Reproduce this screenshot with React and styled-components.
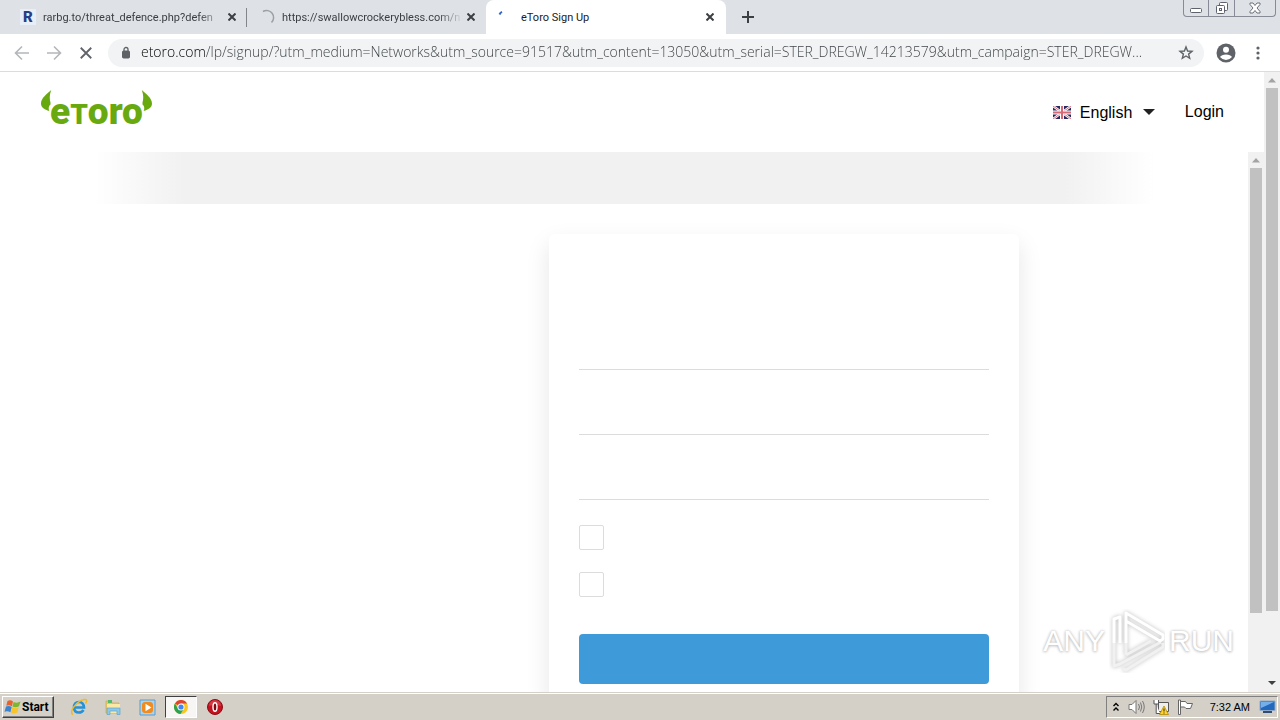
import React from "react";
import styled, { createGlobalStyle, css } from "styled-components";

const Global = createGlobalStyle`
  * { box-sizing: border-box; }
  body { margin: 0; background: #fff; font-family: "Liberation Sans", Arial, sans-serif; }
  button, input, select { font-family: inherit; margin: 0; }
  svg { display: block; flex: none; }
`;

const Desktop = styled.div`
  display: flex;
  flex-direction: column;
  height: 100vh;
  overflow: hidden;
`;

/* Browser tabs */
const TabStrip = styled.header`
  display: flex;
  flex: none;
  height: 34px;
  padding-left: 8px;
  background: #dee1e6;
`;

const Tab = styled.div`
  position: relative;
  display: flex;
  align-items: center;
  flex: 0 1 239px;
  min-width: 0;
  padding: 0 7px 0 12px;
  font: 11px Roboto, sans-serif;
  color: #3c4043;
  ${(p) => p.$divider && css`
    &::after {
      content: "";
      position: absolute;
      right: 0;
      top: 8px;
      height: 19px;
      width: 1px;
      background: #80868b;
    }
  `}
  ${(p) => p.$active && css`
    flex-basis: 240px;
    padding-right: 8px;
    background: #fff;
    border-radius: 8px 8px 0 0;
    color: #202124;
  `}
`;

const TabTitle = styled.span`
  flex: 1;
  overflow: hidden;
  margin-left: 7px;
  white-space: nowrap;
  ${(p) => p.$fade && css`mask-image: linear-gradient(90deg, #000 86%, transparent);`}
`;

const SiteInitial = styled.span`
  width: 16px;
  background: #e8eef8;
  font: 900 15px/16px Roboto, sans-serif;
  text-align: center;
  color: #253f85;
`;

const PlainButton = styled.button`
  display: flex;
  align-items: center;
  justify-content: center;
  flex: none;
  width: ${(p) => p.$w || 16}px;
  height: ${(p) => p.$h || 16}px;
  padding: 0;
  border: 0;
  background: none;
  color: ${(p) => p.$color || "#3c4043"};
`;

const NewTab = styled(PlainButton)`
  margin-left: 8px;
`;

const WindowButtons = styled.div`
  display: flex;
  height: 17px;
  margin: 0 4px 0 auto;
  border: 1px solid #868b95;
  border-top: 0;
  border-radius: 0 0 4px 4px;
`;

const WindowButton = styled(PlainButton)`
  height: 16px;
  & + & { border-left: 1px solid #868b95; }
`;

/* Browser toolbar */
const Toolbar = styled.nav`
  display: flex;
  align-items: center;
  flex: none;
  height: 38px;
  padding: 0 6px;
  border-bottom: 1px solid #dadce0;
  background: #fff;
`;

const Omnibox = styled.div`
  display: flex;
  align-items: center;
  flex: 1;
  min-width: 0;
  height: 28px;
  margin: 0 6px;
  padding: 0 8px 0 10px;
  border-radius: 14px;
  background: #f1f3f4;
`;

const Address = styled.input`
  flex: 1;
  min-width: 0;
  height: 26px;
  padding: 0 0 2px;
  margin-left: 7px;
  border: 0;
  outline: 0;
  font: 300 14px "Open Sans", sans-serif;
  color: transparent;
  background: linear-gradient(90deg, #000 65px, #3c4043 65px);
  background-clip: text;
  -webkit-background-clip: text;
`;

/* Web page */
const Viewport = styled.div`
  position: relative;
  display: flex;
  flex: 1;
  min-height: 0;
`;

const Site = styled.div`
  display: flex;
  flex-direction: column;
  flex: 1;
  min-width: 0;
`;

const SiteHeader = styled.header`
  display: flex;
  align-items: center;
  flex: none;
  height: 80px;
  padding: 0 40px;
  font-size: 16px;
  color: #000;
`;

const Brand = styled.a`
  display: flex;
  align-items: flex-start;
  height: 44px;
  color: #69a910;
  text-decoration: none;
`;

const BrandName = styled.span`
  display: flex;
  align-items: baseline;
  margin: 0 -3px;
  font: 900 37px/44px Roboto, sans-serif;
`;

const SmallCap = styled.span`
  font-size: 28px;
`;

const Language = styled.label`
  display: flex;
  align-items: center;
  gap: 9px;
  margin-left: auto;
`;

const LanguageSelect = styled.select`
  appearance: none;
  padding: 0;
  border: 0;
  background: none;
  font-size: 16px;
  color: #000;
`;

const LoginLink = styled.a`
  margin-left: 29px;
  color: #000;
  text-decoration: none;
`;

const Frame = styled.div`
  display: flex;
  flex: 1;
  min-height: 0;
`;

const FrameBody = styled.main`
  flex: 1;
  min-width: 0;
  overflow: hidden;
`;

const Container = styled.div`
  width: 85%;
  margin: 0 auto;
`;

const Banner = styled.div`
  height: 52px;
  background: linear-gradient(90deg, #fff, #f1f1f1 90px, #f1f1f1 calc(100% - 90px), #fff);
`;

const Card = styled.form`
  display: flex;
  flex-direction: column;
  width: 470px;
  max-width: 100%;
  height: 600px;
  margin: 30px 135px 0 auto;
  padding: 71px 30px 30px;
  border-radius: 6px;
  background: #fff;
  box-shadow: 0 10px 25px rgba(0, 0, 0, 0.1);
`;

const Field = styled.input`
  flex: none;
  height: 65px;
  padding: 30px 0 0;
  border: 0;
  border-bottom: 1px solid #dcdcdc;
  outline: 0;
  background: none;
  font-size: 16px;
`;

const Checks = styled.div`
  display: flex;
  flex-direction: column;
  gap: 22px;
  margin: 25px 0 37px;
`;

const Check = styled.input`
  appearance: none;
  width: 25px;
  height: 25px;
  border: 1px solid #dcdcdc;
  border-radius: 2px;
  background: #fff;
`;

const Submit = styled.button`
  flex: none;
  height: 50px;
  border: 0;
  border-radius: 4px;
  background: #3f9ad9;
`;

const Scrollbar = styled.div`
  display: flex;
  flex-direction: column;
  align-items: center;
  justify-content: space-between;
  flex: none;
  width: 16px;
  background: #f1f1f1;
`;

const ScrollTrack = styled.div`
  flex: 1;
  width: 12px;
`;

const Thumb = styled.div`
  height: ${(p) => p.$size}%;
  background: #c1c1c1;
`;

const Watermark = styled.div`
  position: absolute;
  right: 46px;
  bottom: 19px;
  display: flex;
  align-items: center;
  gap: 4px;
  font: 30px/64px "Liberation Sans", sans-serif;
  color: #fff;
  text-shadow: 0 0 3px #bbb, 0 1px 3px #ccc;
`;

/* Taskbar */
const Taskbar = styled.footer`
  display: flex;
  align-items: center;
  flex: none;
  height: 28px;
  padding: 1px 2px 0;
  border-top: 1px solid #d4d0c8;
  box-shadow: inset 0 1px #fff;
  background: #d4d0c8;
  font: 11px Roboto, sans-serif;
`;

const StartButton = styled.button`
  display: flex;
  align-items: center;
  gap: 1px;
  width: 52px;
  height: 22px;
  margin-right: 9px;
  padding: 0 1px;
  border: 1px solid;
  border-color: #fff #404040 #404040 #fff;
  box-shadow: inset -1px -1px #808080;
  background: #d4d0c8;
  font: bold 12px Roboto, sans-serif;
  color: #000;
`;

const TaskButton = styled.button`
  display: flex;
  align-items: center;
  justify-content: center;
  width: 32px;
  height: 22px;
  margin-right: 2px;
  padding: 0;
  border: 1px solid transparent;
  background: none;
  ${(p) => p.$pressed && css`
    border-color: #404040 #fff #fff #404040;
    background: #f7f6f4;
  `}
`;

const Tray = styled.div`
  display: flex;
  align-items: center;
  gap: 8px;
  height: 22px;
  margin-left: auto;
  padding: 0 1px 0 5px;
  border: 1px solid;
  border-color: #808080 #fff #fff #808080;
  color: #000;
`;

const Clock = styled.time`
  margin: 0 1px 0 8px;
  font: 11px/20px "Liberation Sans", sans-serif;
`;

const Cross = ({ size = 8, weight = 2 }) => (
  <svg width={size} height={size} viewBox="0 0 8 8" stroke="currentColor" strokeWidth={weight}>
    <path d="M.5 .5 7.5 7.5M7.5 .5 .5 7.5" />
  </svg>
);

const Arrow = ({ flip }) => (
  <svg width="16" height="16" viewBox="0 0 16 16" fill="none" stroke="currentColor" strokeWidth="1.6">
    <path d={flip ? "M1 8H14M8 1.5 14.5 8 8 14.5" : "M15 8H2M8 1.5 1.5 8 8 14.5"} />
  </svg>
);

const ScrollArrow = ({ down, color }) => (
  <svg width="16" height="16" viewBox="0 0 16 16" fill={color}>
    <path d={down ? "M4 5H12L8 9Z" : "M4 10.5H12L8 6Z"} />
  </svg>
);

const Horn = ({ right }) => (
  <svg width="13" height="24" viewBox="0 0 13 24" fill="currentColor">
    <path
      transform={right ? "matrix(-1 0 0 1 13 0)" : undefined}
      d="M11.200 0C7 4 1 8 1 13.500 1 17.500 4.500 19.500 9.300 21 8.300 18.500 8.500 16 10.500 14.500V12.500C9.500 9.500 9.300 5 11.200 0Z"
    />
  </svg>
);

const Flag = () => (
  <svg width="18" height="13" viewBox="0 0 18 13">
    <path fill="#27295f" d="M0 0H18V13H0Z" />
    <path stroke="#fff" strokeWidth="2.4" d="M0 0 18 13M18 0 0 13" />
    <path stroke="#d84b59" strokeWidth=".8" d="M0 0 18 13M18 0 0 13" />
    <path stroke="#fff" strokeWidth="4" d="M9 0V13M0 6.5H18" />
    <path stroke="#d66a74" strokeWidth="2" d="M9 0V13M0 6.5H18" />
  </svg>
);

const WindowsLogo = () => (
  <svg width="17" height="16" viewBox="0 0 17 16">
    <path fill="#e8622c" d="M3.500 2Q6.500 .5 9 2.500L7.900 7.300Q5 5.500 2.300 6.800Z" />
    <path fill="#7db72f" d="M9.600 3Q13 4.500 16.500 2.500L15 7.200Q12 9 8.400 7.500Z" />
    <path fill="#3c83cf" d="M2 7.500Q5 6.300 7.700 8L6.400 13.300Q3.500 11.500 .5 12.700Z" />
    <path fill="#f7c52b" d="M8.200 8.300Q11.500 10 14.700 8.200L13.300 13.500Q10 15.300 6.900 13.700Z" />
  </svg>
);

const IeIcon = () => (
  <svg width="18" height="18" viewBox="0 0 18 18" fill="none">
    <path stroke="#2591d6" strokeWidth="2.6" d="M4.500 9.500H14Q13.500 4 9 4 4 4 4 9.500 4 14.500 9 14.500 12 14.500 13.500 12" />
    <path stroke="#8bd0f5" d="M5 8.500Q6 4.500 9 4.500" />
    <path stroke="#efb928" strokeWidth="1.5" d="M3 16.500C-2 14 7 3 14 1.500 17 1 17.500 3 15.500 5.500" />
  </svg>
);

const FolderIcon = () => (
  <svg width="18" height="18" viewBox="0 0 18 18">
    <path fill="#e7c667" stroke="#d0ab4c" strokeWidth=".7" d="M2 3H7L8 5H15V15H2Z" />
    <path fill="#55b96b" d="M4 2H8V5H4Z" />
    <path fill="#fae8a4" d="M3 6H16V15H3Z" />
    <path fill="#8dc8e8" stroke="#5ba3cf" strokeWidth=".7" d="M3 10H16V16.500H13V13H6V16.500H3Z" />
  </svg>
);

const MediaIcon = () => (
  <svg width="17" height="17" viewBox="0 0 17 17">
    <path fill="#a9d4ef" stroke="#5d9bca" d="M1 1H16V16H1Z" />
    <rect x="3" y="3" width="11" height="11" rx="3" fill="#ef8b1f" />
    <path fill="#fff" d="M6.500 4.800 12.500 8.500 6.500 12.200Z" />
  </svg>
);

const ChromeIcon = () => (
  <svg width="14" height="14" viewBox="0 0 14 14">
    <circle cx="7" cy="7" r="7" fill="#f9c623" />
    <path fill="#de4436" d="M7 7 .9 3.500A7 7 0 0 1 13.100 3.500H7Z" />
    <path fill="#2da14e" d="M.9 3.500A7 7 0 0 0 6.500 14L10 8.500 7 7 4 8.800Z" />
    <circle cx="7" cy="7" r="3.500" fill="#fff" />
    <circle cx="7" cy="7" r="2.600" fill="#4285f4" />
  </svg>
);

const OperaIcon = () => (
  <svg width="16" height="16" viewBox="0 0 16 16">
    <circle cx="8" cy="8" r="7.5" fill="#c4121f" stroke="#8a0d16" />
    <path fill="#e8626a" opacity=".5" d="M2 7A6 6 0 0 1 14 7Q8 5 2 7Z" />
    <ellipse cx="8" cy="8" rx="2" ry="4.3" fill="#7c0a12" stroke="#fff" strokeWidth="1.4" />
  </svg>
);

const PlayMark = () => (
  <svg width="56" height="64" viewBox="0 0 56 64" fill="none" strokeLinejoin="round">
    <g filter="drop-shadow(0 0 2px #bbb)">
      <path stroke="#f1f1f1" strokeWidth="3" d="M5 34V57L11 55 52 33M17 46V34M17 46 42 32M14 60 17 61 54 38V34" />
      <path stroke="#fff" strokeWidth="3" d="M5 34V10L11 8V34M17 34V4L54 26V30L51 32 17 12" />
    </g>
  </svg>
);

export default function App() {
  return (
    <Desktop>
      <Global />
      <TabStrip>
        <Tab $divider>
          <SiteInitial>R</SiteInitial>
          <TabTitle $fade>rarbg.to/threat_defence.php?defen</TabTitle>
          <PlainButton aria-label="Close tab"><Cross /></PlainButton>
        </Tab>
        <Tab>
          <svg width="16" height="16" viewBox="0 0 16 16" fill="none" stroke="#9aa0a6" strokeWidth="1.5">
            <path d="M4 2.500A7 7 0 0 1 12.500 13.500" />
          </svg>
          <TabTitle $fade>https://swallowcrockerybless.com/n</TabTitle>
          <PlainButton aria-label="Close tab"><Cross /></PlainButton>
        </Tab>
        <Tab $active>
          <svg width="16" height="16" viewBox="0 0 16 16" fill="none" stroke="#3367c8" strokeWidth="2">
            <path d="M1.500 5.500Q2.300 3.600 4 2.800" />
          </svg>
          <TabTitle>eToro Sign Up</TabTitle>
          <PlainButton aria-label="Close tab"><Cross /></PlainButton>
        </Tab>
        <NewTab aria-label="New tab" $w={28} $h={34}>
          <svg width="12" height="12" viewBox="0 0 12 12" stroke="currentColor" strokeWidth="2">
            <path d="M6 0V12M0 6H12" />
          </svg>
        </NewTab>
        <WindowButtons>
          <WindowButton aria-label="Minimize" $w={24}>
            <svg width="12" height="12" viewBox="0 0 12 12" fill="#fff" stroke="#5d626c">
              <rect x=".5" y="6.5" width="11" height="4" rx="1" />
            </svg>
          </WindowButton>
          <WindowButton aria-label="Restore" $w={26}>
            <svg width="14" height="14" viewBox="0 0 14 14" fill="#fff" stroke="#5d626c">
              <rect x="4.5" y="1.5" width="8" height="8" rx="1" />
              <rect x="1.5" y="4.5" width="8" height="8" rx="1" />
              <rect x="4.5" y="7.5" width="2" height="2" />
            </svg>
          </WindowButton>
          <WindowButton aria-label="Close" $w={41}>
            <svg width="12" height="12" viewBox="0 0 12 12" fill="#fff" stroke="#5d626c" strokeWidth=".9">
              <path d="M1 1H4L6 3.500 8 1H11V2.500L8 6 11 9.500V11H8L6 8.500 4 11H1V9.500L4 6 1 2.500Z" />
            </svg>
          </WindowButton>
        </WindowButtons>
      </TabStrip>

      <Toolbar>
        <PlainButton aria-label="Back" $w={32} $h={28} $color="#b4b7ba"><Arrow /></PlainButton>
        <PlainButton aria-label="Forward" $w={32} $h={28} $color="#b4b7ba"><Arrow flip /></PlainButton>
        <PlainButton aria-label="Stop loading" $w={32} $h={28} $color="#5f6368"><Cross size={12} weight={1.2} /></PlainButton>
        <Omnibox>
          <svg width="16" height="16" viewBox="0 0 16 16" fill="none" stroke="#5f6368">
            <rect x="4.500" y="6" width="7" height="7" rx="1" fill="#5f6368" />
            <path strokeWidth="1.3" d="M6 6.500V4.500a2 2 0 0 1 4 0V6.500" />
          </svg>
          <Address
            aria-label="Address"
            readOnly
            value="etoro.com/lp/signup/?utm_medium=Networks&utm_source=91517&utm_content=13050&utm_serial=STER_DREGW_14213579&utm_campaign=STER_DREGW..."
          />
          <PlainButton aria-label="Bookmark" $w={20} $h={20} $color="#5f6368">
            <svg width="16" height="16" viewBox="0 0 16 16" fill="none" stroke="currentColor" strokeWidth="1.4">
              <path d="M8 2 9.600 6 14 6.300 10.600 9.100 11.700 13.300 8 11 4.300 13.300 5.400 9.100 2 6.300 6.400 6Z" />
            </svg>
          </PlainButton>
        </Omnibox>
        <PlainButton aria-label="Profile" $w={32} $h={28} $color="#5f6368">
          <svg width="20" height="20" viewBox="0 0 20 20">
            <circle cx="10" cy="10" r="9.5" fill="currentColor" />
            <circle cx="10" cy="6.800" r="3" fill="#fff" />
            <path fill="#fff" d="M4 14Q5.500 11.500 10 11.500T16 14Q13.500 17 10 17T4 14Z" />
          </svg>
        </PlainButton>
        <PlainButton aria-label="Menu" $w={32} $h={28} $color="#5f6368">
          <svg width="4" height="16" viewBox="0 0 4 16" fill="currentColor">
            <circle cx="2" cy="3" r="1.600" /><circle cx="2" cy="8" r="1.600" /><circle cx="2" cy="13" r="1.600" />
          </svg>
        </PlainButton>
      </Toolbar>

      <Viewport>
        <Site>
          <SiteHeader>
            <Brand href="#" aria-label="eToro">
              <Horn />
              <BrandName>e<SmallCap>T</SmallCap>oro</BrandName>
              <Horn right />
            </Brand>
            <Language>
              <Flag />
              <LanguageSelect aria-label="Language"><option>English</option></LanguageSelect>
              <svg width="14" height="8" viewBox="0 0 14 8"><path fill="#222" d="M1 1H13L7 7Z" /></svg>
            </Language>
            <LoginLink href="#">Login</LoginLink>
          </SiteHeader>
          <Frame>
            <FrameBody>
              <Container>
                <Banner />
                <Card>
                  <Field aria-label="Username" />
                  <Field aria-label="Email" type="email" />
                  <Field aria-label="Password" type="password" />
                  <Checks>
                    <Check type="checkbox" aria-label="Accept terms" />
                    <Check type="checkbox" aria-label="Accept privacy policy" />
                  </Checks>
                  <Submit type="button" aria-label="Create account" />
                </Card>
              </Container>
            </FrameBody>
            <Scrollbar>
              <ScrollArrow color="#a3a3a3" />
              <ScrollTrack><Thumb $size={85} /></ScrollTrack>
            </Scrollbar>
          </Frame>
        </Site>
        <Scrollbar>
          <ScrollArrow color="#a3a3a3" />
          <ScrollTrack><Thumb $size={89} /></ScrollTrack>
          <ScrollArrow down color="#404040" />
        </Scrollbar>
        <Watermark>
          <span>ANY</span>
          <PlayMark />
          <span>RUN</span>
        </Watermark>
      </Viewport>

      <Taskbar>
        <StartButton><WindowsLogo />Start</StartButton>
        <TaskButton aria-label="Internet Explorer"><IeIcon /></TaskButton>
        <TaskButton aria-label="Explorer"><FolderIcon /></TaskButton>
        <TaskButton aria-label="Media Player"><MediaIcon /></TaskButton>
        <TaskButton aria-label="Chrome" $pressed><ChromeIcon /></TaskButton>
        <TaskButton aria-label="Opera"><OperaIcon /></TaskButton>
        <Tray>
          <svg width="8" height="10" viewBox="0 0 8 10" fill="none" stroke="#000" strokeWidth="1.4">
            <path d="M1.500 4 4 1.500 6.500 4M1.500 8.500 4 6 6.500 8.500" />
          </svg>
          <svg width="17" height="16" viewBox="0 0 17 16" fill="none" stroke="#777">
            <path fill="#fff" d="M1 5.500H4L8 1.500V14.500L4 10.500H1Z" />
            <path d="M10.500 5Q12.500 8 10.500 11M12.500 3.500Q15 8 12.500 12.500M14.500 2Q18 8 14.500 14" />
          </svg>
          <svg width="16" height="16" viewBox="0 0 16 16" fill="none" stroke="#555">
            <path fill="#eee" d="M5.500 3.500H15.500V12.500H5.500Z" />
            <path fill="#fff" d="M1 1V5H5.500V1M3.200 5V14.500H7" />
            <path fill="#ffd22e" stroke="#b18a00" strokeWidth=".8" d="M11 7 15.500 15.500H6.500Z" />
            <path stroke="#222" d="M11 9.500V12.500M11 13.500V14.500" />
          </svg>
          <svg width="17" height="16" viewBox="0 0 17 16" fill="#fff" stroke="#666">
            <path d="M1.500 1V15.500H3.500V1ZM3.500 2.500H8.500L10 4.500H15.500L13.500 9.500H9L7.500 8H3.500Z" />
          </svg>
          <Clock>7:32 AM</Clock>
          <svg width="17" height="14" viewBox="0 0 17 14">
            <path fill="#2268bd" stroke="#8fa9c7" d="M1 1H16V10.500H1Z" />
            <path fill="#75afe9" d="M2 2H15L2 8Z" />
            <path fill="#304c70" d="M4 11H13V13H4Z" />
          </svg>
        </Tray>
      </Taskbar>
    </Desktop>
  );
}
